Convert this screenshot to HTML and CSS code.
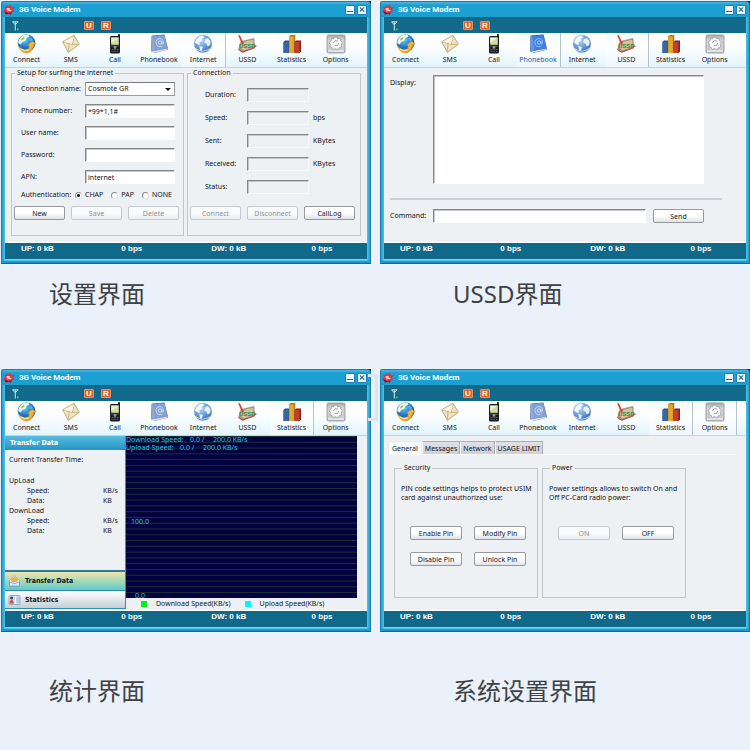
FILE: index.html
```
<!DOCTYPE html>
<html lang="zh-CN">
<head>
<meta charset="utf-8">
<title>3G Voice Modem</title>
<link rel="stylesheet" href="styles.css">
</head>
<body>
<svg class="sprite" width="0" height="0" aria-hidden="true">
  <defs>
    <radialGradient id="gBlue" cx=".4" cy=".3" r=".8"><stop offset="0" stop-color="#7cc9f5"/><stop offset=".5" stop-color="#1f7fd0"/><stop offset="1" stop-color="#083c86"/></radialGradient>
    <radialGradient id="gPale" cx=".4" cy=".3" r=".8"><stop offset="0" stop-color="#b9d8f6"/><stop offset=".6" stop-color="#5c93cf"/><stop offset="1" stop-color="#2c5b9c"/></radialGradient>
    <linearGradient id="gGrey" x1="0" y1="0" x2="0" y2="1"><stop offset="0" stop-color="#a9acb0"/><stop offset=".3" stop-color="#d3d5d8"/><stop offset="1" stop-color="#c6c8cb"/></linearGradient>
    <linearGradient id="gOrange" x1="0" y1="0" x2="1" y2="1"><stop offset="0" stop-color="#ffe07a"/><stop offset="1" stop-color="#e78a08"/></linearGradient>
  </defs>
  <symbol id="i-logo" viewBox="0 0 10 10">
    <path d="M3 .8 4.6 2 6.3.6 7 2.4 9.5 2.6 8.4 4.6 9.4 6.4 7.3 6.8 6.6 9 4.8 7.8 2.6 9 2.4 6.8.4 6 1.8 4.3.8 2.4 2.8 2.5Z" fill="#e2313f"/>
    <path d="M3.2 3.4h2.2L6 4.7l1.6.2-1.4 1.3-1.4-.4-1 .6-.2-1.4-1-.6Z" fill="#fbc1ba"/>
    <path d="M.8 6.2 2.6 9l2-1L6.6 9l.7-2.2-2.6.6Z" fill="#8d1626"/>
  </symbol>
  <symbol id="i-signal" viewBox="0 0 8 10">
    <path d="M.4.8h6M.8 1l2.500 2.800L5.900 1M3.300 1v8.500" fill="none" stroke="#d3e4ea" stroke-width="1"/>
    <path d="M5 7.600h1.500v1.600H5z" fill="#52e04a"/>
  </symbol>
  <symbol id="i-connect" viewBox="0 0 20 20">
    <circle cx="9.500" cy="9" r="8.800" fill="url(#gBlue)"/>
    <path d="M3.600 3.200Q6.500.3 11 .8L12.600 2.600 9.500 4 8.300 6.800 5.200 8 3.800 10.500 1.200 9Q1.600 5.300 3.600 3.200Z" fill="#f1f9e6"/>
    <path d="M4.500 4.200 7.400 2.900 7 5 4.200 6.600Z" fill="#8cc152"/>
    <path d="M11.500 4.500 14.500 3.500 16.500 6.500 13.500 7.500Z" fill="#56a8d8"/>
    <path d="M1.400 11.500Q5 17 11.400 14.800L12.400 11.400 10.200 11.600 15.200 7.200 19.400 9.800 17 10.600Q16.200 16.500 11.200 18.900 4 20.300 1.400 11.500Z" fill="url(#gOrange)" stroke="#c77912" stroke-width=".4"/>
    <path d="M3.500 14.600Q7 17.800 12 15.900" fill="none" stroke="#fff1a6" stroke-width=".9"/>
  </symbol>
  <symbol id="i-sms" viewBox="0 0 20 20">
    <path d="M1.600 7.800 13 1.400l5.400 8.800L7.400 18.400Z" fill="#efe2bf" stroke="#a98f5e" stroke-width=".7"/>
    <path d="M2.200 8 11.400 10.400 13 2.200M7.400 17.600 8 9.600M17.600 10.400 11.200 10.300" fill="none" stroke="#b49a69" stroke-width=".6"/>
    <path d="M2.800 7.800 12.800 2.600 11 9.800Z" fill="#fbf5e2"/>
  </symbol>
  <symbol id="i-call" viewBox="0 0 20 20">
    <rect x="13" y="0" width="2" height="5" rx=".8" fill="#24272a"/>
    <rect x="5" y="2" width="10" height="17.500" rx="1.600" fill="#1b1d1f"/>
    <rect x="6.200" y="3.600" width="7.600" height="7.200" fill="#cfe0a0"/>
    <path d="M6.200 3.600h7.600L6.200 9z" fill="#eef5d2"/>
    <path d="M5.800 12.200h8.400" stroke="#5d6368" stroke-width=".9"/>
    <circle cx="10" cy="13.400" r="1.300" fill="#9aa1a6"/>
    <path d="M6.500 15.500h1.800M9.100 15.500h1.800M11.700 15.500h1.800M6.500 17.300h1.800M9.100 17.300h1.800M11.700 17.300h1.800" stroke="#6b7075" stroke-width=".8"/>
  </symbol>
  <symbol id="i-book" viewBox="0 0 20 20">
    <path d="M2.600 1.600 15.500.6 19.200 15.400 6.400 18.800 2 17.300Z" fill="#5672ab"/>
    <path d="M4.200 1.900 15.300 1 18.400 14.200 6.600 16.400Z" fill="#84a0d4"/>
    <path d="M2.200 17 6.600 16.800 18.600 14.400 18.900 15.300 6.600 18.400Z" fill="#e4ebf5"/>
    <path d="M2.900 1.900 4.200 1.900 6.600 16.600 2.200 16.900Z" fill="#93a9d3"/>
    <circle cx="11" cy="8.600" r="1.700" fill="none" stroke="#d5e3fa" stroke-width=".9"/>
    <path d="M12.800 6.900v2.400q.4 1.400 1.500.5 1-3.800-2-5-4-.9-5.300 2.600-.5 4.600 3.600 5.300 1.600.1 2.800-.7" fill="none" stroke="#d5e3fa" stroke-width=".8"/>
  </symbol>
  <symbol id="i-book-hot" viewBox="0 0 20 20">
    <path d="M2.600 1.600 15.500.6 19.200 15.400 6.400 18.800 2 17.300Z" fill="#2450a4"/>
    <path d="M4.200 1.900 15.300 1 18.400 14.200 6.600 16.400Z" fill="#4580e0"/>
    <path d="M2.200 17 6.600 16.800 18.600 14.400 18.900 15.300 6.600 18.400Z" fill="#dce8fa"/>
    <path d="M2.900 1.900 4.200 1.900 6.600 16.600 2.200 16.900Z" fill="#6d98dc"/>
    <circle cx="11" cy="8.600" r="1.700" fill="none" stroke="#9fd0ff" stroke-width=".9"/>
    <path d="M12.800 6.900v2.400q.4 1.400 1.500.5 1-3.800-2-5-4-.9-5.300 2.600-.5 4.600 3.600 5.300 1.600.1 2.800-.7" fill="none" stroke="#9fd0ff" stroke-width=".8"/>
  </symbol>
  <symbol id="i-internet" viewBox="0 0 20 20">
    <circle cx="10" cy="9.800" r="8.800" fill="url(#gPale)" stroke="#8ba9cb" stroke-width=".5"/>
    <path d="M3.500 5Q6 1.600 10 1.500L11.200 3.400 8.700 4.600 9 6.600 6.400 8.800 6.800 11 4.600 10.600 2 8.400Q2.500 6.300 3.500 5Z" fill="#f3f8fd"/>
    <path d="M12 5.200 15 4 17.600 7.200 17.200 11 14.800 12.600 13.400 9.500 11.400 8.400Z" fill="#e6f0fb"/>
    <path d="M6.200 11.800 9.800 13 9 17 7 16.200Z" fill="#e6f0fb"/>
    <path d="M3 14.500Q9 20 16.800 14.700" fill="none" stroke="#cfe2f6" stroke-width=".9"/>
  </symbol>
  <symbol id="i-ussd" viewBox="0 0 20 20">
    <path d="M4 7.500 17 4.400 17.600 13.600 5.500 18.200 1.500 15.600Z" fill="#b08f70" stroke="#8b7358" stroke-width=".5"/>
    <path d="M3.400 12.500 8 7.500l8.200-1.800.7 7.200L6 16.600Z" fill="#d3c0a4"/>
    <path d="M1.200 1.500 2.800 1 6.800 9.800 5 10.200Z" fill="#d2452f"/>
    <path d="M1.500 15.600 5.500 18.200 17.600 13.800" fill="none" stroke="#c04436" stroke-width="1"/>
    <path d="M16.500 12.200h3" stroke="#c43a56" stroke-width="1.200"/>
  </symbol>
  <symbol id="i-stats" viewBox="0 0 20 20">
    <path d="M1.500 8 3 6.600h5v10.600L6.600 19H1.500Z" fill="#24518f"/><path d="M1.500 8H6.600V19H1.500Z" fill="#3566a6"/>
    <path d="M7.200 2.600 8.600 1h4.700v15.600L12.200 19h-5Z" fill="#b97d0d"/><path d="M7.200 2.600h4.600V19H7.200Z" fill="#e0a92b"/>
    <path d="M12.600 8 14 6.600h5v10.600L17.600 19h-5Z" fill="#8e2217"/><path d="M12.600 8h4.800V19h-4.800Z" fill="#bd4030"/>
  </symbol>
  <symbol id="i-options" viewBox="0 0 20 20">
    <rect x="1" y="1" width="18" height="18" rx="1.600" fill="url(#gGrey)" stroke="#8b8e93" stroke-width=".8"/>
    <path d="M2 17h16" stroke="#f2f3f4" stroke-width="1.200"/>
    <path d="M7.800 3.500 10.600 2.900l1 2 2.400-.4.8 2.600 1.600 1.300-1 2 .5 2.400-2.500 1-1.200 1.900-2.400-1-2.500.8-1.100-2.100L3.900 12.600l.6-2.300L3.100 8.300l2-1.500.5-2.400 2.200.5Z" fill="#f7f8f8" stroke="#92969b" stroke-width=".7"/>
    <path d="M7.200 9 9.200 6.600l2.600.4M12.600 9l-1.200 2.700-2.800-.2" fill="none" stroke="#989ca1" stroke-width=".9"/>
  </symbol>
  <symbol id="i-mail" viewBox="0 0 12 12">
    <path d="M1 5.500 6 1l5 4.500V11H1Z" fill="#e9f1fb" stroke="#7393c5" stroke-width=".6"/>
    <path d="M2.200 5.500Q6-1.400 9.800 5.500L8.500 7h-5Z" fill="#f2b23d"/>
    <path d="M1 7 6 8.600 11 7v4H1Z" fill="#dbe8f9" stroke="#5f86c2" stroke-width=".6"/>
  </symbol>
  <symbol id="i-card" viewBox="0 0 12 12">
    <rect x=".5" y="1.500" width="11" height="9" rx=".8" fill="#cfdcf1" stroke="#6c89b8" stroke-width=".6"/>
    <circle cx="3.200" cy="4" r="1.500" fill="#4a3f45"/><path d="M1.200 9.500q0-3.500 2-3.500t2 3.500Z" fill="#d14a32"/>
    <path d="M7 2v8" stroke="#f7f9fd" stroke-width=".8"/><path d="M8 4h2.600M8 6h2.600M8 8h2.600" stroke="#87a2ce" stroke-width=".7"/>
  </symbol>
</svg>

<main class="board">
  <figure class="shot">
    <section class="window">
      <header class="titlebar"><svg class="logo"><use href="#i-logo"/></svg><h2>3G Voice Modem</h2><button class="win-btn min" aria-label="Minimize"></button><button class="win-btn close" aria-label="Close"></button></header>
      <div class="band"><svg class="signal"><use href="#i-signal"/></svg><span class="badge">U</span><span class="badge">R</span></div>
      <nav class="toolbar">
        <button class="tool"><svg><use href="#i-connect"/></svg>Connect</button>
        <button class="tool"><svg><use href="#i-sms"/></svg>SMS</button>
        <button class="tool"><svg><use href="#i-call"/></svg>Call</button>
        <button class="tool"><svg><use href="#i-book"/></svg>Phonebook</button>
        <button class="tool on"><svg><use href="#i-internet"/></svg>Internet</button>
        <button class="tool"><svg viewBox="0 0 20 20"><use href="#i-ussd"/><text x="2" y="14" class="ussd-mark">USSD</text></svg>USSD</button>
        <button class="tool"><svg><use href="#i-stats"/></svg>Statistics</button>
        <button class="tool"><svg><use href="#i-options"/></svg>Options</button>
      </nav>
      <div class="pane pane-net">
        <fieldset class="group">
          <legend>Setup for surfing the internet</legend>
          <div class="form">
            <label for="conn">Connection name:</label>
            <span class="select"><select id="conn"><option>Cosmote GR</option></select></span>
            <label for="phone">Phone number:</label><input class="field" id="phone" value="*99*1,1#">
            <label for="user">User name:</label><input class="field" id="user">
            <label for="pass">Password:</label><input class="field" id="pass" type="password">
            <label for="apn">APN:</label><input class="field" id="apn" value="internet">
          </div>
          <div class="auth"><span>Authentication:</span>
            <label><input type="radio" name="auth" checked>CHAP</label>
            <label><input type="radio" name="auth">PAP</label>
            <label><input type="radio" name="auth">NONE</label>
          </div>
          <div class="actions"><button class="btn">New</button><button class="btn" disabled>Save</button><button class="btn" disabled>Delete</button></div>
        </fieldset>
        <fieldset class="group">
          <legend>Connection</legend>
          <div class="meter">
            <label for="dur">Duration:</label><input class="field flat" id="dur" readonly><span></span>
            <label for="spd">Speed:</label><input class="field flat" id="spd" readonly><span>bps</span>
            <label for="sent">Sent:</label><input class="field flat" id="sent" readonly><span>KBytes</span>
            <label for="recv">Received:</label><input class="field flat" id="recv" readonly><span>KBytes</span>
            <label for="stat">Status:</label><input class="field flat" id="stat" readonly><span></span>
          </div>
          <div class="actions"><button class="btn" disabled>Connect</button><button class="btn" disabled>Disconnect</button><button class="btn">CallLog</button></div>
        </fieldset>
      </div>
      <footer class="status"><span>UP: 0 kB</span><span>0 bps</span><span>DW: 0 kB</span><span>0 bps</span></footer>
    </section>
    <figcaption>设置界面</figcaption>
  </figure>

  <figure class="shot right">
    <section class="window">
      <header class="titlebar"><svg class="logo"><use href="#i-logo"/></svg><h2>3G Voice Modem</h2><button class="win-btn min" aria-label="Minimize"></button><button class="win-btn close" aria-label="Close"></button></header>
      <div class="band"><svg class="signal"><use href="#i-signal"/></svg><span class="badge">U</span><span class="badge">R</span></div>
      <nav class="toolbar">
        <button class="tool"><svg><use href="#i-connect"/></svg>Connect</button>
        <button class="tool"><svg><use href="#i-sms"/></svg>SMS</button>
        <button class="tool"><svg><use href="#i-call"/></svg>Call</button>
        <button class="tool on hot"><svg><use href="#i-book-hot"/></svg>Phonebook</button>
        <button class="tool"><svg><use href="#i-internet"/></svg>Internet</button>
        <button class="tool on"><svg viewBox="0 0 20 20"><use href="#i-ussd"/><text x="2" y="14" class="ussd-mark">USSD</text></svg>USSD</button>
        <button class="tool"><svg><use href="#i-stats"/></svg>Statistics</button>
        <button class="tool"><svg><use href="#i-options"/></svg>Options</button>
      </nav>
      <div class="pane pane-ussd">
        <div class="display-row"><label for="disp">Display:</label><textarea class="field" id="disp"></textarea></div>
        <hr>
        <div class="command-row"><label for="cmd">Command:</label><input class="field" id="cmd"><button class="btn">Send</button></div>
      </div>
      <footer class="status"><span>UP: 0 kB</span><span>0 bps</span><span>DW: 0 kB</span><span>0 bps</span></footer>
    </section>
    <figcaption>USSD界面</figcaption>
  </figure>

  <figure class="shot lower marked">
    <section class="window">
      <header class="titlebar"><svg class="logo"><use href="#i-logo"/></svg><h2>3G Voice Modem</h2><button class="win-btn min" aria-label="Minimize"></button><button class="win-btn close" aria-label="Close"></button></header>
      <div class="band"><svg class="signal"><use href="#i-signal"/></svg><span class="badge">U</span><span class="badge">R</span></div>
      <nav class="toolbar">
        <button class="tool"><svg><use href="#i-connect"/></svg>Connect</button>
        <button class="tool"><svg><use href="#i-sms"/></svg>SMS</button>
        <button class="tool"><svg><use href="#i-call"/></svg>Call</button>
        <button class="tool"><svg><use href="#i-book"/></svg>Phonebook</button>
        <button class="tool"><svg><use href="#i-internet"/></svg>Internet</button>
        <button class="tool"><svg viewBox="0 0 20 20"><use href="#i-ussd"/><text x="2" y="14" class="ussd-mark">USSD</text></svg>USSD</button>
        <button class="tool on"><svg><use href="#i-stats"/></svg>Statistics</button>
        <button class="tool"><svg><use href="#i-options"/></svg>Options</button>
      </nav>
      <div class="pane pane-stats">
        <aside class="side">
          <h3>Transfer Data</h3>
          <div class="figures">
            <p class="time">Current Transfer Time:</p>
            <p>UpLoad</p>
            <p class="sub"><span>Speed:</span><span>KB/s</span></p>
            <p class="sub"><span>Data:</span><span>KB</span></p>
            <p>DownLoad</p>
            <p class="sub"><span>Speed:</span><span>KB/s</span></p>
            <p class="sub"><span>Data:</span><span>KB</span></p>
          </div>
          <button class="side-tab active"><svg><use href="#i-mail"/></svg>Transfer Data</button>
          <button class="side-tab"><svg><use href="#i-card"/></svg>Statistics</button>
        </aside>
        <div class="chart-col">
          <div class="chart">
            <p><span>Download Speed:</span><span>0.0 /</span><span>200.0 KB/s</span></p>
            <p><span>Upload Speed:</span><span>0.0 /</span><span>200.0 KB/s</span></p>
            <span class="mid">100.0</span>
            <span class="low">0.0</span>
          </div>
          <ul class="key"><li>Download Speed(KB/s)</li><li class="up">Upload Speed(KB/s)</li></ul>
        </div>
      </div>
      <footer class="status"><span>UP: 0 kB</span><span>0 bps</span><span>DW: 0 kB</span><span>0 bps</span></footer>
    </section>
    <figcaption>统计界面</figcaption>
  </figure>

  <figure class="shot right lower">
    <section class="window">
      <header class="titlebar"><svg class="logo"><use href="#i-logo"/></svg><h2>3G Voice Modem</h2><button class="win-btn min" aria-label="Minimize"></button><button class="win-btn close" aria-label="Close"></button></header>
      <div class="band"><svg class="signal"><use href="#i-signal"/></svg><span class="badge">U</span><span class="badge">R</span></div>
      <nav class="toolbar">
        <button class="tool"><svg><use href="#i-connect"/></svg>Connect</button>
        <button class="tool"><svg><use href="#i-sms"/></svg>SMS</button>
        <button class="tool"><svg><use href="#i-call"/></svg>Call</button>
        <button class="tool"><svg><use href="#i-book"/></svg>Phonebook</button>
        <button class="tool"><svg><use href="#i-internet"/></svg>Internet</button>
        <button class="tool"><svg viewBox="0 0 20 20"><use href="#i-ussd"/><text x="2" y="14" class="ussd-mark">USSD</text></svg>USSD</button>
        <button class="tool on"><svg><use href="#i-stats"/></svg>Statistics</button>
        <button class="tool on"><svg><use href="#i-options"/></svg>Options</button>
      </nav>
      <div class="pane pane-opt">
        <div class="tabs"><button class="tab active">General</button><button class="tab">Messages</button><button class="tab">Network</button><button class="tab">USAGE LIMIT</button></div>
        <div class="cards">
          <fieldset class="group">
            <legend>Security</legend>
            <p>PIN code settings helps to protect USIM<br>card against unauthorized use:</p>
            <div class="pins"><button class="btn">Enable Pin</button><button class="btn">Modify Pin</button><button class="btn">Disable Pin</button><button class="btn">Unlock Pin</button></div>
          </fieldset>
          <fieldset class="group">
            <legend>Power</legend>
            <p>Power settings allows to switch On and<br>Off PC-Card radio power:</p>
            <div class="pins"><button class="btn" disabled>ON</button><button class="btn">OFF</button></div>
          </fieldset>
        </div>
      </div>
      <footer class="status"><span>UP: 0 kB</span><span>0 bps</span><span>DW: 0 kB</span><span>0 bps</span></footer>
    </section>
    <figcaption>系统设置界面</figcaption>
  </figure>
</main>
</body>
</html>
```
FILE: styles.css
```
* { box-sizing: border-box; }

body {
  margin: 0;
  background: #eaf1fa;
  color: #141519;
  font: 7px/10px "Noto Sans", "DejaVu Sans Condensed", sans-serif;
}

button, input, select, textarea { font: inherit; color: inherit; margin: 0; padding: 0; border-radius: 0; outline: 0; }
h2, h3, p, ul, figure, fieldset { margin: 0; padding: 0; font-size: inherit; }
.sprite { position: absolute; }

.board {
  display: grid;
  grid-template-columns: 1fr 1fr;
  column-gap: 9px;
  padding: 1px 0 0 1px;
  min-height: 100vh;
  grid-template-rows: 368px 1fr;
}

/* dark and tan specks show behind the rounded window corners */
.shot {
  position: relative;
  background:
    linear-gradient(#14181c, #14181c) top right / 4px 4px no-repeat,
    linear-gradient(#c9a45a, #c9a45a) top left / 3px 3px no-repeat;
}
.marked::after {
  content: "";
  position: absolute;
  top: 5px;
  right: -7px;
  width: 7px;
  height: 41px;
  border: 3px solid #dde4ee;
  border-left: 0;
  border-radius: 0 2px 2px 0;
}

figcaption {
  padding: 12px 0 0 48px;
  color: #404144;
  font: 400 24px/36px "Noto Sans", "Noto Sans CJK SC", sans-serif;
}
.right figcaption { padding-left: 73px; }
.lower figcaption { padding-top: 41px; }

/* window frame */
.window {
  display: flex;
  flex-direction: column;
  border: 1px solid #1480ab;
  border-bottom-color: #0f6c94;
  border-radius: 4px 4px 0 0;
  background: linear-gradient(90deg, #1f9fce, #55c0e6 3px, #55c0e6 calc(100% - 3px), #1f9fce);
  padding: 0 3px 3px 3px;
  box-shadow: inset 0 -2px #1d98c8;
  min-height: 263px;
}
.titlebar {
  display: flex;
  align-items: center;
  gap: 2px;
  height: 15px;
  margin: 0 -3px;
  padding: 0 3px 0 1px;
  border-radius: 3px 3px 0 0;
  background: linear-gradient(#4cb9e0, #1c9fd2 3px, #1c9fd2);
}
.titlebar h2 { flex: 1; padding-left: 2px; color: #fff; font: bold 8px/12px Roboto, sans-serif; }
.logo { flex: none; width: 12px; height: 12px; }
.win-btn { position: relative; width: 10px; height: 10px; border: 1px solid #1c7fab; border-radius: 1px; background: #eef7fb; }
.win-btn::before, .win-btn::after { content: ""; position: absolute; left: 1px; top: 3px; width: 6px; height: 1px; background: #1c6d92; }
.min::before { top: 5px; }
.min::after { display: none; }
.close::before { transform: rotate(45deg); }
.close::after { transform: rotate(-45deg); }

.band { display: flex; align-items: center; height: 16px; padding: 0 7px; background: #126a8b; border-top: 1px solid #0f5b78; }
.signal { width: 8px; height: 10px; margin-right: 64px; }
.badge { width: 10px; height: 9px; margin-right: 7px; border: 1px solid #e9925f; border-radius: 1px; background: #d9632b; color: #fff; font: bold 8px/7px "Liberation Sans", sans-serif; text-align: center; }

.toolbar { display: flex; height: 35px; background: linear-gradient(#fff 35%, #e2f4fb); border-bottom: 1px solid #c3d5dc; }
.tool {
  display: flex;
  flex: 0 0 12.2%;
  flex-direction: column;
  align-items: center;
  border: 0;
  padding: 1px 0 0;
  background: none;
  border-right: 1px solid transparent;
  line-height: 10px;
}
.tool svg { width: 20px; height: 20px; margin-bottom: 1px; }
.tool.on { background: linear-gradient(#f2fafd, #fff 40%, #eef7fb); border-right-color: #b5c4cc; }
.tool.hot { color: #1b5fae; }
.ussd-mark { font: bold 6px "Liberation Sans", sans-serif; fill: #2b8a36; }

.pane { flex: 1; background: #edf1f4; border-bottom: 1px solid #fff; }
.status {
  display: grid;
  grid-template-columns: 29% 26% 29% 1fr;
  height: 17px;
  padding-left: 16px;
  border-bottom: 1px solid #8fcde3;
  background: #116989;
  color: #fff;
  font: bold 8px/12px "Liberation Sans", sans-serif;
}

/* shared controls */
.group { min-width: 0; border: 1px solid #bfc5c9; }
.group legend { line-height: 10px; margin-left: 1px; padding: 0 2px; }
.field {
  display: block;
  width: 100%;
  height: 14px;
  border: 1px solid #fff;
  border-top-color: #85878b;
  border-left-color: #85878b;
  background: #fff;
  box-shadow: inset 1px 1px #c4c6ca;
  padding: 0 2px;
}
.field.flat { background: #edf1f4; border-right-color: #f6f8fa; border-bottom-color: #f6f8fa; }
.btn {
  height: 14px;
  border: 1px solid #98999f;
  border-radius: 2px;
  background: linear-gradient(#fff 50%, #e1e2e7);
  line-height: 11px;
}
.btn:disabled { color: #8d9094; border-color: #c5c8cd; background: linear-gradient(#fafbfc 50%, #ebedf1); }
.actions { display: grid; grid-template-columns: 51px 51px 51px; gap: 6px; }

/* connection settings */
.pane-net { display: grid; grid-template-columns: 173fr 174fr; gap: 3px; padding: 0 6px; align-items: start; }
.pane-net .group { height: 168px; padding: 0 2px; }
.form { display: grid; grid-template-columns: 64px 90px; grid-auto-rows: 22px; align-items: center; padding-left: 7px; }
.select { position: relative; display: block; height: 14px; }
.select select { width: 100%; height: 14px; border: 1px solid #9a9c9f; border-top-color: #777a7e; background: #fff; padding: 0 2px; appearance: none; }
.select::after { content: ""; position: absolute; right: 4px; top: 6px; border: 3px solid transparent; border-top-color: #111; border-bottom: 0; pointer-events: none; }
.auth { display: flex; align-items: center; gap: 8px; height: 14px; margin-bottom: 4px; padding-left: 7px; white-space: nowrap; }
.auth span { width: 46px; }
.auth label { display: flex; align-items: center; gap: 3px; }
.auth input { appearance: none; width: 7px; height: 7px; border: 1px solid #888b8f; border-right-color: #dfe2e5; border-bottom-color: #dfe2e5; border-radius: 50%; background: #fff; }
.auth input:checked { background: radial-gradient(#111 1px, #fff 2px); }
.meter { display: grid; grid-template-columns: 42px 62px 1fr; grid-auto-rows: 23px; align-items: center; padding: 5px 0 8px 15px; }
.meter span { padding-left: 4px; }

/* USSD */
.pane-ussd { padding: 7px 24px 0 6px; }
.display-row { display: grid; grid-template-columns: 43px 1fr; padding-right: 18px; }
.display-row label { padding-top: 3px; }
.display-row textarea { height: 109px; resize: none; }
.pane-ussd hr { margin: 14px 0 9px; border: 0; border-top: 2px solid #cbcfd5; }
.command-row { display: grid; grid-template-columns: 43px 1fr 51px; padding-right: 18px; align-items: center; }
.command-row .field { width: calc(100% - 7px); }

/* transfer statistics */
.pane-stats { display: grid; grid-template-columns: 121px 1fr; }
.side { display: flex; flex-direction: column; border-right: 1px solid #2f8fae; margin-bottom: 1px; }
.side h3 { height: 14px; padding-left: 5px; background: linear-gradient(#5bbbdf, #2296c6); color: #fff; font: bold 7px/14px "DejaVu Sans Condensed", sans-serif; }
.figures { flex: 1; padding: 5px 7px 0 4px; border-bottom: 2px solid #22809e; }
.figures .time { margin-bottom: 11px; }
.sub { display: grid; grid-template-columns: 1fr 15px; padding-left: 18px; }
.side-tab { display: flex; align-items: center; gap: 4px; height: 18px; border: 0; border-bottom: 1px solid #2f8fae; padding: 0 0 0 3px; background: linear-gradient(#fff, #c4cfd4); font: bold 7px/10px "DejaVu Sans Condensed", sans-serif; }
.side-tab svg { width: 13px; height: 12px; }
.side-tab.active { height: 19px; background: linear-gradient(#f3e3ab, #9ed8b9 55%, #5fc8cb); }
.chart-col { padding-right: 10px; }
.chart {
  position: relative;
  height: 162px;
  background: #01013f repeat-y;
  background-image: linear-gradient(#1c3034 1px, transparent 1px);
  background-size: 100% calc(100% / 28);
  color: #21c6e0;
}
.chart p { display: grid; grid-template-columns: 64px 23px 1fr; line-height: 8px; }
.chart p + p { grid-template-columns: 54px 23px 1fr; }
.mid, .low { position: absolute; left: 5px; bottom: 71px; }
.low { left: 9px; bottom: -3px; }
.key { display: flex; gap: 14px; list-style: none; padding-left: 15px; line-height: 12px; }
.key li { display: flex; align-items: center; gap: 9px; }
.key li::before { content: ""; width: 6px; height: 6px; background: #00f01c; }
.key .up::before { background: #00f6ff; }

/* options */
.pane-opt { padding: 5px 10px 0 4px; }
.tabs { display: flex; height: 14px; border-bottom: 1px solid #f9fafb; }
.tab { height: 13px; border: 1px solid #a9adb3; border-left-color: #fff; border-bottom: 0; padding: 0 2px; background: linear-gradient(#dfe1e7, #cccfd7); line-height: 11px; }
.tab.active { height: 14px; padding: 0 3px; background: #f8f9fb; border-color: #e8eaee; }
.cards { display: grid; grid-template-columns: 144px 144px; gap: 4px; padding: 8px 0 0 6px; }
.cards .group { height: 135px; padding: 11px 6px 0; }
.cards .group p { line-height: 9px; white-space: nowrap; }
.pins { display: grid; grid-template-columns: 52px 52px; gap: 12px; padding: 24px 0 0 9px; }
```
